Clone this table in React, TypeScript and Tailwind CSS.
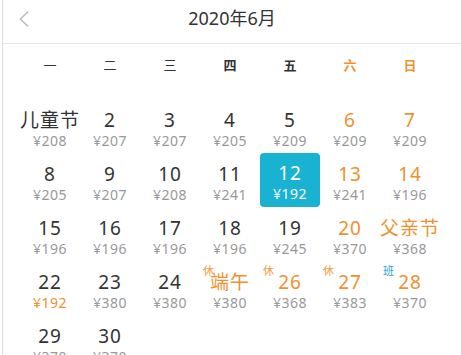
import React from "react";

type Day = {
  label: string;
  price?: string;
  weekend?: boolean;
  holiday?: boolean;
  tag?: "休" | "班";
  cheap?: boolean;
  selected?: boolean;
};

const weekdays = ["一", "二", "三", "四", "五", "六", "日"];

const days: Day[] = [
  { label: "儿童节", price: "208" },
  { label: "2", price: "207" },
  { label: "3", price: "207" },
  { label: "4", price: "205" },
  { label: "5", price: "209" },
  { label: "6", price: "209", weekend: true },
  { label: "7", price: "209", weekend: true },
  { label: "8", price: "205" },
  { label: "9", price: "207" },
  { label: "10", price: "208" },
  { label: "11", price: "241" },
  { label: "12", price: "192", selected: true },
  { label: "13", price: "241", weekend: true },
  { label: "14", price: "196", weekend: true },
  { label: "15", price: "196" },
  { label: "16", price: "196" },
  { label: "17", price: "196" },
  { label: "18", price: "196" },
  { label: "19", price: "245" },
  { label: "20", price: "370", weekend: true },
  { label: "父亲节", price: "368", weekend: true },
  { label: "22", price: "192", cheap: true },
  { label: "23", price: "380" },
  { label: "24", price: "380" },
  { label: "端午", price: "380", holiday: true, tag: "休" },
  { label: "26", price: "368", holiday: true, tag: "休" },
  { label: "27", price: "383", weekend: true, tag: "休" },
  { label: "28", price: "370", weekend: true, tag: "班" },
  { label: "29", price: "370" },
  { label: "30", price: "370" },
];

function DayCell({ d }: { d: Day }) {
  const orange = d.weekend || d.holiday;
  if (d.selected) {
    return (
      <div className="relative h-[54px] rounded-[4px] bg-[#1ab2d2] flex flex-col items-center text-white">
        <span className="mt-[9px] text-[19px] leading-[22px] tracking-[1px]">{d.label}</span>
        <span className="mt-[1px] text-[14px] leading-[18px] tracking-[0.5px]">¥{d.price}</span>
      </div>
    );
  }
  return (
    <div className="relative h-[54px] flex flex-col items-center">
      {d.tag && (
        <span
          className={`absolute top-[3px] left-[3px] text-[11px] leading-[13px] ${
            d.tag === "班" ? "text-[#2a9fd0]" : "text-[#f39a44]"
          }`}
        >
          {d.tag}
        </span>
      )}
      <span
        className={`mt-[10px] text-[19px] leading-[22px] tracking-[1px] ${
          orange ? "text-[#f0902e]" : "text-[#333]"
        }`}
      >
        {d.label}
      </span>
      <span
        className={`mt-[1px] text-[14px] leading-[18px] tracking-[0.5px] ${
          d.cheap ? "text-[#f0902e]" : "text-[#999]"
        }`}
      >
        ¥{d.price}
      </span>
    </div>
  );
}

export default function App() {
  return (
    <div
      className="w-[461px] h-[355px] overflow-hidden bg-white pl-[2px]"
      style={{ fontFamily: '"Noto Sans", "Noto Sans CJK SC", sans-serif' }}
    >
      <div className="h-full border-l border-[#dedede]">
        <div className="relative h-[44px] border-b border-[#e6e6e6] flex items-center justify-center">
          <svg
            className="absolute left-[14px] top-[10px]"
            width="14"
            height="18"
            viewBox="0 0 14 18"
            fill="none"
          >
            <path d="M11 1.5 L3.5 9 L11 16.5" stroke="#bdbdbd" strokeWidth="1.6" />
          </svg>
          <span className="text-[18px] text-[#333] mt-[-7px]">2020年6月</span>
        </div>
        <div className="ml-[17px] w-[420px]">
          <div className="grid grid-cols-7 h-[44px] items-center">
            {weekdays.map((w, i) => (
              <span
                key={w}
                className={`text-center text-[13px] ${i < 3 ? "font-normal" : "font-semibold"} ${
                  i >= 5 ? "text-[#f0902e]" : "text-[#333]"
                }`}
              >
                {w}
              </span>
            ))}
          </div>
          <div className="grid grid-cols-7 mt-[11px]">
            {days.map((d, i) => (
              <DayCell key={i} d={d} />
            ))}
          </div>
        </div>
      </div>
    </div>
  );
}
